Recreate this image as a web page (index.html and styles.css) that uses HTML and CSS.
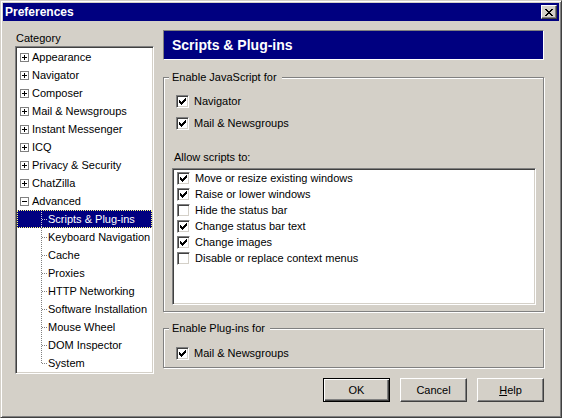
FILE: index.html
```html
<!DOCTYPE html>
<html>
<head>
<meta charset="utf-8">
<title>Preferences</title>
<link rel="stylesheet" href="styles.css">
</head>
<body>
<div class="window">
  <div class="titlebar">
    <span class="title">Preferences</span>
    <span class="close"><svg width="8" height="7" viewBox="0 0 8 7" shape-rendering="crispEdges"><path fill="#000" d="M0 0h2v1H0z M6 0h2v1H6z M1 1h2v1H1z M5 1h2v1H5z M2 2h4v1H2z M3 3h2v1H3z M2 4h4v1H2z M1 5h2v1H1z M5 5h2v1H5z M0 6h2v1H0z M6 6h2v1H6z"/></svg></span>
  </div>
  <div class="content">
    <div class="sidebar">
      <div class="cat-label">Category</div>
      <div class="tree">
        <div class="row"><span class="exp"><svg width="9" height="9" viewBox="0 0 9 9" shape-rendering="crispEdges"><rect x="0.5" y="0.5" width="8" height="8" fill="#fff" stroke="#808080"/><path fill="#000" d="M2 4h5v1H2z M4 2h1v5H4z"/></svg></span><span>Appearance</span></div>
        <div class="row"><span class="exp"><svg width="9" height="9" viewBox="0 0 9 9" shape-rendering="crispEdges"><rect x="0.5" y="0.5" width="8" height="8" fill="#fff" stroke="#808080"/><path fill="#000" d="M2 4h5v1H2z M4 2h1v5H4z"/></svg></span><span>Navigator</span></div>
        <div class="row"><span class="exp"><svg width="9" height="9" viewBox="0 0 9 9" shape-rendering="crispEdges"><rect x="0.5" y="0.5" width="8" height="8" fill="#fff" stroke="#808080"/><path fill="#000" d="M2 4h5v1H2z M4 2h1v5H4z"/></svg></span><span>Composer</span></div>
        <div class="row"><span class="exp"><svg width="9" height="9" viewBox="0 0 9 9" shape-rendering="crispEdges"><rect x="0.5" y="0.5" width="8" height="8" fill="#fff" stroke="#808080"/><path fill="#000" d="M2 4h5v1H2z M4 2h1v5H4z"/></svg></span><span>Mail &amp; Newsgroups</span></div>
        <div class="row"><span class="exp"><svg width="9" height="9" viewBox="0 0 9 9" shape-rendering="crispEdges"><rect x="0.5" y="0.5" width="8" height="8" fill="#fff" stroke="#808080"/><path fill="#000" d="M2 4h5v1H2z M4 2h1v5H4z"/></svg></span><span>Instant Messenger</span></div>
        <div class="row"><span class="exp"><svg width="9" height="9" viewBox="0 0 9 9" shape-rendering="crispEdges"><rect x="0.5" y="0.5" width="8" height="8" fill="#fff" stroke="#808080"/><path fill="#000" d="M2 4h5v1H2z M4 2h1v5H4z"/></svg></span><span>ICQ</span></div>
        <div class="row"><span class="exp"><svg width="9" height="9" viewBox="0 0 9 9" shape-rendering="crispEdges"><rect x="0.5" y="0.5" width="8" height="8" fill="#fff" stroke="#808080"/><path fill="#000" d="M2 4h5v1H2z M4 2h1v5H4z"/></svg></span><span>Privacy &amp; Security</span></div>
        <div class="row"><span class="exp"><svg width="9" height="9" viewBox="0 0 9 9" shape-rendering="crispEdges"><rect x="0.5" y="0.5" width="8" height="8" fill="#fff" stroke="#808080"/><path fill="#000" d="M2 4h5v1H2z M4 2h1v5H4z"/></svg></span><span>ChatZilla</span></div>
        <div class="row"><span class="exp"><svg width="9" height="9" viewBox="0 0 9 9" shape-rendering="crispEdges"><rect x="0.5" y="0.5" width="8" height="8" fill="#fff" stroke="#808080"/><path fill="#000" d="M2 4h5v1H2z"/></svg></span><span>Advanced</span></div>
        <div class="row child sel"><span class="conn"></span><span class="lbl">Scripts &amp; Plug-ins</span></div>
        <div class="row child"><span class="conn"></span><span class="lbl">Keyboard Navigation</span></div>
        <div class="row child"><span class="conn"></span><span class="lbl">Cache</span></div>
        <div class="row child"><span class="conn"></span><span class="lbl">Proxies</span></div>
        <div class="row child"><span class="conn"></span><span class="lbl">HTTP Networking</span></div>
        <div class="row child"><span class="conn"></span><span class="lbl">Software Installation</span></div>
        <div class="row child"><span class="conn"></span><span class="lbl">Mouse Wheel</span></div>
        <div class="row child"><span class="conn"></span><span class="lbl">DOM Inspector</span></div>
        <div class="row child last"><span class="conn"></span><span class="lbl">System</span></div>
      </div>
    </div>
    <div class="main">
      <div class="header">Scripts &amp; Plug-ins</div>
      <fieldset class="group g1">
        <legend>Enable JavaScript for</legend>
        <div class="check"><span class="cb"><svg width="7" height="7" viewBox="0 0 7 7" shape-rendering="crispEdges"><path fill="#000" d="M0 2h1v3H0z M1 3h1v3H1z M2 4h1v3H2z M3 3h1v3H3z M4 2h1v3H4z M5 1h1v3H5z M6 0h1v3H6z"/></svg></span>Navigator</div>
        <div class="check"><span class="cb"><svg width="7" height="7" viewBox="0 0 7 7" shape-rendering="crispEdges"><path fill="#000" d="M0 2h1v3H0z M1 3h1v3H1z M2 4h1v3H2z M3 3h1v3H3z M4 2h1v3H4z M5 1h1v3H5z M6 0h1v3H6z"/></svg></span>Mail &amp; Newsgroups</div>
        <div class="sub-label">Allow scripts to:</div>
        <div class="list">
          <div class="item"><span class="cb"><svg width="7" height="7" viewBox="0 0 7 7" shape-rendering="crispEdges"><path fill="#000" d="M0 2h1v3H0z M1 3h1v3H1z M2 4h1v3H2z M3 3h1v3H3z M4 2h1v3H4z M5 1h1v3H5z M6 0h1v3H6z"/></svg></span>Move or resize existing windows</div>
          <div class="item"><span class="cb"><svg width="7" height="7" viewBox="0 0 7 7" shape-rendering="crispEdges"><path fill="#000" d="M0 2h1v3H0z M1 3h1v3H1z M2 4h1v3H2z M3 3h1v3H3z M4 2h1v3H4z M5 1h1v3H5z M6 0h1v3H6z"/></svg></span>Raise or lower windows</div>
          <div class="item"><span class="cb"></span>Hide the status bar</div>
          <div class="item"><span class="cb"><svg width="7" height="7" viewBox="0 0 7 7" shape-rendering="crispEdges"><path fill="#000" d="M0 2h1v3H0z M1 3h1v3H1z M2 4h1v3H2z M3 3h1v3H3z M4 2h1v3H4z M5 1h1v3H5z M6 0h1v3H6z"/></svg></span>Change status bar text</div>
          <div class="item"><span class="cb"><svg width="7" height="7" viewBox="0 0 7 7" shape-rendering="crispEdges"><path fill="#000" d="M0 2h1v3H0z M1 3h1v3H1z M2 4h1v3H2z M3 3h1v3H3z M4 2h1v3H4z M5 1h1v3H5z M6 0h1v3H6z"/></svg></span>Change images</div>
          <div class="item"><span class="cb"></span>Disable or replace context menus</div>
        </div>
      </fieldset>
      <fieldset class="group g2">
        <legend>Enable Plug-ins for</legend>
        <div class="check"><span class="cb"><svg width="7" height="7" viewBox="0 0 7 7" shape-rendering="crispEdges"><path fill="#000" d="M0 2h1v3H0z M1 3h1v3H1z M2 4h1v3H2z M3 3h1v3H3z M4 2h1v3H4z M5 1h1v3H5z M6 0h1v3H6z"/></svg></span>Mail &amp; Newsgroups</div>
      </fieldset>
      <div class="buttons">
        <button class="btn default">OK</button>
        <button class="btn">Cancel</button>
        <button class="btn"><u>H</u>elp</button>
      </div>
    </div>
  </div>
</div>
</body>
</html>
```

FILE: styles.css
```css
* { box-sizing: border-box; }
html, body { margin: 0; padding: 0; }
body {
  width: 562px;
  height: 418px;
  overflow: hidden;
  background: #d4d0c8;
  font-family: "Liberation Sans", Arial, sans-serif;
  font-size: 11px;
  color: #000;
}
.window {
  width: 562px;
  height: 418px;
  padding: 2px;
  background: #d4d0c8;
  border: 1px solid;
  border-color: #d4d0c8 #404040 #404040 #d4d0c8;
  box-shadow: inset 1px 1px 0 #fff, inset -1px -1px 0 #808080;
}
.titlebar {
  height: 18px;
  background: #000080;
  display: flex;
  align-items: center;
  justify-content: space-between;
  padding: 0 2px 0 2px;
}
.title {
  color: #fff;
  font-weight: bold;
  font-size: 12px;
}
.close {
  width: 16px;
  height: 14px;
  display: flex;
  align-items: center;
  justify-content: center;
  background: #d4d0c8;
  border: 1px solid;
  border-color: #fff #404040 #404040 #fff;
  box-shadow: inset -1px -1px 0 #808080;
}
.close svg { display: block; }
.content {
  display: grid;
  grid-template-columns: 139px 381px;
  column-gap: 9px;
  padding: 9px 0 0 12px;
}
.cat-label {
  height: 16px;
  line-height: 16px;
  padding-left: 1px;
}
.tree {
  height: 328px;
  background: #fff;
  border: 1px solid;
  border-color: #808080 #fff #fff #808080;
  box-shadow: inset 1px 1px 0 #404040, inset -1px -1px 0 #d4d0c8;
  padding: 1px;
}
.row {
  height: 18px;
  display: flex;
  align-items: center;
  white-space: nowrap;
  padding-left: 3px;
}
.exp { display: block; width: 9px; height: 9px; margin-right: 3px; }
.exp svg { display: block; }
.row.child { padding-left: 24px; }
.conn {
  align-self: stretch;
  width: 6px;
  margin-right: 1px;
  background:
    repeating-linear-gradient(to bottom, #808080 0 1px, transparent 1px 2px) left top / 1px 100% no-repeat,
    repeating-linear-gradient(to right, #808080 0 1px, transparent 1px 2px) left 1px top 9px / 5px 1px no-repeat;
}
.row.last .conn {
  background:
    repeating-linear-gradient(to bottom, #808080 0 1px, transparent 1px 2px) left top / 1px 10px no-repeat,
    repeating-linear-gradient(to right, #808080 0 1px, transparent 1px 2px) left 1px top 9px / 5px 1px no-repeat;
}
.row.sel {
  background: #000080;
  color: #fff;
  outline: 1px dotted #ffff80;
  outline-offset: -1px;
}
.row.sel .conn {
  background:
    repeating-linear-gradient(to bottom, #c8c8d8 0 1px, transparent 1px 2px) left top / 1px 100% no-repeat,
    repeating-linear-gradient(to right, #c8c8d8 0 1px, transparent 1px 2px) left 1px top 9px / 5px 1px no-repeat;
}
.main {
  display: flex;
  flex-direction: column;
}
.header {
  height: 30px;
  background: #000080;
  color: #fff;
  font-weight: bold;
  font-size: 14px;
  line-height: 28px;
  padding-left: 8px;
  border: 1px solid;
  border-color: #808080 #fff #fff #808080;
}
.group {
  margin: 10px 0 0 0;
  min-width: 0;
  border: 1px solid #808080;
  box-shadow: inset 1px 1px 0 #fff, 1px 1px 0 #fff;
}
.group legend {
  padding: 0 5px 0 3px;
  margin-left: -3px;
  line-height: 14px;
  background: #d4d0c8;
}
.g1 { padding: 6px 7px 6px 8px; }
.g2 { margin-top: 9px; padding: 7px 7px 3px 8px; }
.check {
  display: flex;
  align-items: center;
  height: 22px;
  padding-left: 4px;
}
.cb {
  flex: none;
  width: 13px;
  height: 13px;
  margin-right: 5px;
  padding: 2px;
  background: #fff;
  border: 1px solid;
  border-color: #808080 #fff #fff #808080;
  box-shadow: inset 1px 1px 0 #404040, inset -1px -1px 0 #d4d0c8;
}
.cb svg { display: block; }
.sub-label {
  margin-top: 15px;
  height: 16px;
  line-height: 16px;
  padding-left: 2px;
}
.list {
  margin-top: 3px;
  height: 137px;
  background: #fff;
  padding: 1px;
  border: 1px solid;
  border-color: #808080 #fff #fff #808080;
  box-shadow: inset 1px 1px 0 #404040, inset -1px -1px 0 #d4d0c8;
}
.item {
  height: 16px;
  display: flex;
  align-items: center;
  padding-left: 3px;
  white-space: nowrap;
}
.buttons {
  display: flex;
  justify-content: flex-end;
  gap: 10px;
  margin-top: 10px;
}
.btn {
  width: 67px;
  height: 24px;
  margin: 0;
  padding: 0;
  font: inherit;
  color: #000;
  background: #d4d0c8;
  border: 1px solid;
  border-color: #fff #404040 #404040 #fff;
  box-shadow: inset -1px -1px 0 #808080;
}
.btn.default {
  border-color: #000;
  box-shadow: inset 1px 1px 0 #fff, inset -1px -1px 0 #404040, inset -2px -2px 0 #808080;
}
```
